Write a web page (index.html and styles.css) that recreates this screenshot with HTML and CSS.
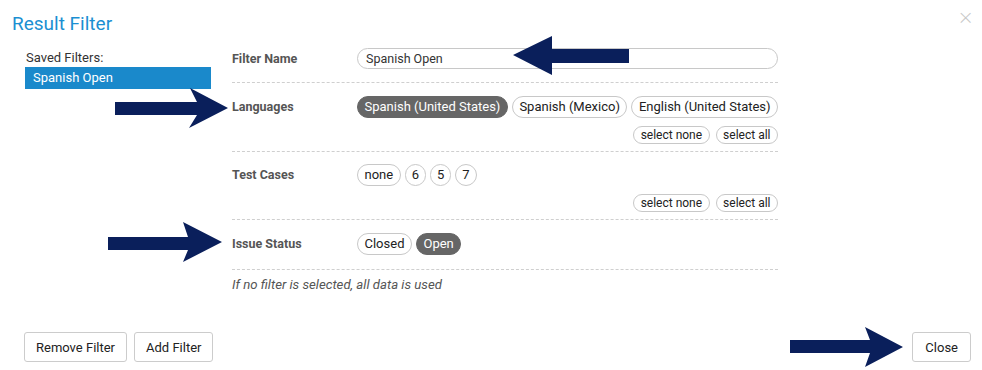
FILE: index.html
```html
<!DOCTYPE html>
<html>
<head>
<meta charset="utf-8">
<link rel="stylesheet" href="styles.css">
</head>
<body>
<div class="modal">
  <div class="header">
    <h1 class="title">Result Filter</h1>
    <span class="close-x">&times;</span>
  </div>
  <div class="body">
    <div class="sidebar">
      <div class="saved-label">Saved Filters:</div>
      <div class="saved-item">Spanish Open</div>
    </div>
    <div class="main">
      <div class="row row-name">
        <div class="label">Filter Name</div>
        <div class="value"><div class="input">Spanish Open</div></div>
      </div>
      <div class="row">
        <div class="label">Languages</div>
        <div class="value">
          <div class="chips">
            <span class="chip on">Spanish (United States)</span>
            <span class="chip">Spanish (Mexico)</span>
            <span class="chip">English (United States)</span>
          </div>
          <div class="selects">
            <span class="chip small">select none</span>
            <span class="chip small">select all</span>
          </div>
        </div>
      </div>
      <div class="row row-tests">
        <div class="label">Test Cases</div>
        <div class="value">
          <div class="chips">
            <span class="chip">none</span>
            <span class="chip num">6</span>
            <span class="chip num">5</span>
            <span class="chip num">7</span>
          </div>
          <div class="selects">
            <span class="chip small">select none</span>
            <span class="chip small">select all</span>
          </div>
        </div>
      </div>
      <div class="row row-last">
        <div class="label">Issue Status</div>
        <div class="value">
          <div class="chips">
            <span class="chip">Closed</span>
            <span class="chip on">Open</span>
          </div>
        </div>
      </div>
      <div class="note">If no filter is selected, all data is used</div>
    </div>
  </div>
  <div class="footer">
    <div class="footer-left">
      <button class="btn">Remove Filter</button>
      <button class="btn">Add Filter</button>
    </div>
    <button class="btn btn-close">Close</button>
  </div>

  <svg class="arrow arrow-name" width="116" height="40" viewBox="0 0 116 40"><polygon points="116,13 39,13 39,0 0,19 39,39 39,27 116,27"/></svg>
  <svg class="arrow arrow-lang" width="114" height="41" viewBox="0 0 114 41"><polygon points="0,14 82,14 75,0 113,20 74,40 82,27 0,27"/></svg>
  <svg class="arrow arrow-status" width="115" height="41" viewBox="0 0 115 41"><polygon points="0,15 80,15 75,0 114,20 75,40 80,28 0,28"/></svg>
  <svg class="arrow arrow-close" width="114" height="41" viewBox="0 0 114 41"><polygon points="0,13 80,13 75,0 113,20 75,40 80,26 0,26"/></svg>
</div>
</body>
</html>
```
FILE: styles.css
```css
* { box-sizing: border-box; }
html, body { margin: 0; padding: 0; background: #fff; }
body {
  font-family: Roboto, "Liberation Sans", Arial, sans-serif;
  font-size: 13px;
  color: #222;
}
.modal {
  position: relative;
  width: 982px;
  height: 370px;
}
.header {
  position: relative;
  padding: 12px 12px 0 12px;
  height: 40px;
}
.title {
  margin: 0;
  font-size: 19px;
  font-weight: 400;
  line-height: 24px;
  color: #1b8fd2;
}
.close-x {
  position: absolute;
  right: 8px;
  top: 5px;
  font-size: 20px;
  line-height: 24px;
  color: #c8c8c8;
  font-family: "DejaVu Sans", sans-serif;
  font-weight: 300;
}
.body {
  display: flex;
  padding-left: 25px;
}
.sidebar {
  width: 186px;
  padding-top: 10px;
}
.saved-label {
  font-size: 13px;
  line-height: 16px;
  color: #333;
  padding-left: 1px;
  margin-bottom: 1px;
}
.saved-item {
  background: #1a89cb;
  color: #fff;
  height: 22px;
  line-height: 22px;
  padding-left: 8px;
  font-size: 13px;
}
.main {
  margin-left: 21px;
  width: 546px;
}
.row {
  display: flex;
  border-bottom: 1px dashed #cfcfcf;
  padding: 13px 0 7px 0;
}
.row-name { padding: 8px 0 13px 0; }
.row-name .label { line-height: 21px; }
.row-tests { padding-top: 12px; }
.row-last { padding-bottom: 14px; }
.label {
  width: 125px;
  flex: none;
  font-weight: 700;
  color: #555;
  font-size: 12.5px;
  line-height: 22px;
}
.value {
  flex: 1;
  min-width: 0;
  display: flex;
  flex-direction: column;
}
.input {
  height: 21px;
  border: 1px solid #c8c8c8;
  border-radius: 11px;
  padding-left: 8px;
  line-height: 19px;
  font-size: 12.5px;
  color: #333;
}
.chips {
  display: flex;
  gap: 4px;
}
.chip {
  display: inline-block;
  height: 22px;
  line-height: 20px;
  padding: 0 6.5px;
  border: 1px solid #c8c8c8;
  border-radius: 11px;
  font-size: 13px;
  color: #222;
  white-space: nowrap;
}
.chip.num { padding: 0 6px; }
.chip.on {
  background: #666;
  border-color: #666;
  color: #fff;
}
.selects {
  display: flex;
  justify-content: flex-end;
  gap: 6px;
  margin-top: 8px;
}
.chip.small {
  height: 18px;
  line-height: 16px;
  font-size: 12px;
  padding: 0 6.5px;
  border-radius: 9px;
}
.note {
  font-style: italic;
  color: #555;
  font-size: 13.2px;
  line-height: 16px;
  padding-top: 7px;
}
.footer {
  position: absolute;
  left: 24px;
  right: 11px;
  top: 332px;
  display: flex;
  justify-content: space-between;
}
.footer-left {
  display: flex;
  gap: 7px;
}
.btn {
  font-family: Roboto, "Liberation Sans", Arial, sans-serif;
  font-size: 13px;
  color: #222;
  background: #fff;
  border: 1px solid #ccc;
  border-radius: 3px;
  height: 30px;
  padding: 0 11px;
}
.btn-close { padding: 0 12px; }
.arrow {
  position: absolute;
  fill: #0a1f5b;
}
.arrow-name { left: 513px; top: 36px; }
.arrow-lang { left: 115px; top: 88px; }
.arrow-status { left: 108px; top: 222px; }
.arrow-close { left: 790px; top: 327px; }
```
